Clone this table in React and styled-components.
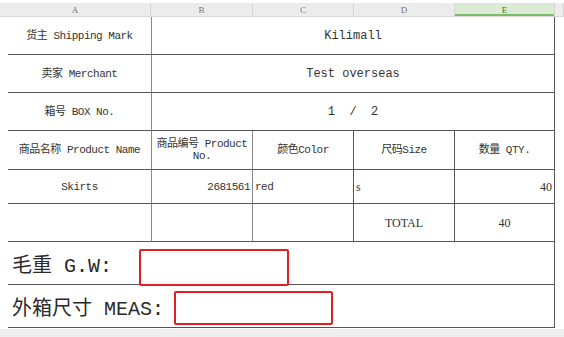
import styled, { createGlobalStyle } from "styled-components";

const GlobalStyle = createGlobalStyle`
  body {
    margin: 0;
    background: #fff;
  }
`;

const Sheet = styled.div`
  width: 564px;
  height: 337px;
  overflow: hidden;
  background: #fff;
  padding-top: 3px;
  box-sizing: border-box;
  font-family: "Liberation Mono", "Noto Sans CJK SC", monospace;
  color: #333;
`;

const ColumnBar = styled.div`
  display: grid;
  grid-template-columns: 151px 102px 101px 101px 100px 1fr;
  height: 14px;
  background: #ececec;
  border-bottom: 1px solid #d8d8d8;
  box-sizing: border-box;
`;

const ColumnHead = styled.div`
  display: flex;
  align-items: center;
  justify-content: center;
  font-family: "Liberation Serif", serif;
  font-size: 9px;
  color: ${(p) => (p.$active ? "#3a7a2a" : "#777")};
  background: ${(p) => (p.$active ? "#dcebd6" : "transparent")};
  border-right: 1px solid #d6d6d6;
  box-shadow: ${(p) => (p.$active ? "inset 0 -2px 0 #7cba63" : "none")};
`;

const Table = styled.div`
  display: grid;
  grid-template-columns: 144px 101px 101px 101px 100px;
  grid-template-rows: 38px 38px 38px 39px 34px 38px 43px 43px;
  margin-left: 8px;
  width: 548px;
  box-sizing: border-box;
`;

const Cell = styled.div`
  grid-column: span ${(p) => p.$span || 1};
  display: flex;
  align-items: center;
  justify-content: ${(p) =>
    p.$align === "right" ? "flex-end" : p.$align === "left" ? "flex-start" : "center"};
  text-align: center;
  padding: ${(p) => (p.$align ? "0 2px" : "0 4px")};
  border-bottom: 1px solid #555;
  border-right: 1px solid ${(p) => (p.$soft ? "#888" : "#555")};
  box-sizing: border-box;
  font-family: ${(p) =>
    p.$serif ? '"Liberation Serif", serif' : '"Liberation Mono", "Noto Sans CJK SC", monospace'};
  font-size: ${(p) => (p.$big ? "12px" : p.$serif ? "12px" : "11px")};
  letter-spacing: ${(p) => (p.$big || p.$serif ? "0" : "-0.5px")};
  line-height: 12px;
  white-space: ${(p) => (p.$pre ? "pre" : "normal")};
`;

const FooterRow = styled.div`
  grid-column: span 5;
  display: flex;
  align-items: center;
  padding-left: 4px;
  border-bottom: 1px solid #555;
  border-right: 1px solid #555;
  box-sizing: border-box;
`;

const FooterLabel = styled.span`
  width: ${(p) => p.$width}px;
  flex-shrink: 0;
  font-size: 20px;
  color: #2a2a2a;
  white-space: pre;
`;

const RedBox = styled.div`
  width: ${(p) => p.$w}px;
  height: ${(p) => p.$h}px;
  margin-top: ${(p) => p.$top || 0}px;
  border: 2px solid #e02020;
  border-radius: 2px;
  box-sizing: border-box;
`;

const BottomBand = styled.div`
  height: 10px;
  margin-top: 1px;
  background: #eeeeee;
`;

const columns = ["A", "B", "C", "D", "E"];

const App = () => {
  return (
    <>
      <GlobalStyle />
      <Sheet>
        <ColumnBar>
          {columns.map((c) => (
            <ColumnHead key={c} $active={c === "E"}>
              {c}
            </ColumnHead>
          ))}
          <ColumnHead />
        </ColumnBar>
        <Table>
          <Cell $soft>货主 Shipping Mark</Cell>
          <Cell $span={4} $big>Kilimall</Cell>

          <Cell $soft>卖家 Merchant</Cell>
          <Cell $span={4} $big>Test overseas</Cell>

          <Cell $soft>箱号 BOX No.</Cell>
          <Cell $span={4} $big $pre>
            {"1  /  2"}
          </Cell>

          <Cell $soft>商品名称 Product Name</Cell>
          <Cell $soft>商品编号 Product No.</Cell>
          <Cell>颜色Color</Cell>
          <Cell>尺码Size</Cell>
          <Cell>数量 QTY.</Cell>

          <Cell $soft>Skirts</Cell>
          <Cell $soft $align="right">2681561</Cell>
          <Cell $align="left">red</Cell>
          <Cell $align="left" $serif>s</Cell>
          <Cell $align="right" $serif>40</Cell>

          <Cell $soft />
          <Cell $soft />
          <Cell />
          <Cell $serif>TOTAL</Cell>
          <Cell $serif>40</Cell>

          <FooterRow>
            <FooterLabel $width={127}>毛重 G.W:</FooterLabel>
            <RedBox $w={150} $h={37} $top={8} />
          </FooterRow>
          <FooterRow>
            <FooterLabel $width={162}>外箱尺寸 MEAS:</FooterLabel>
            <RedBox $w={159} $h={34} $top={4} />
          </FooterRow>
        </Table>
        <BottomBand />
      </Sheet>
    </>
  );
};

export default App;
